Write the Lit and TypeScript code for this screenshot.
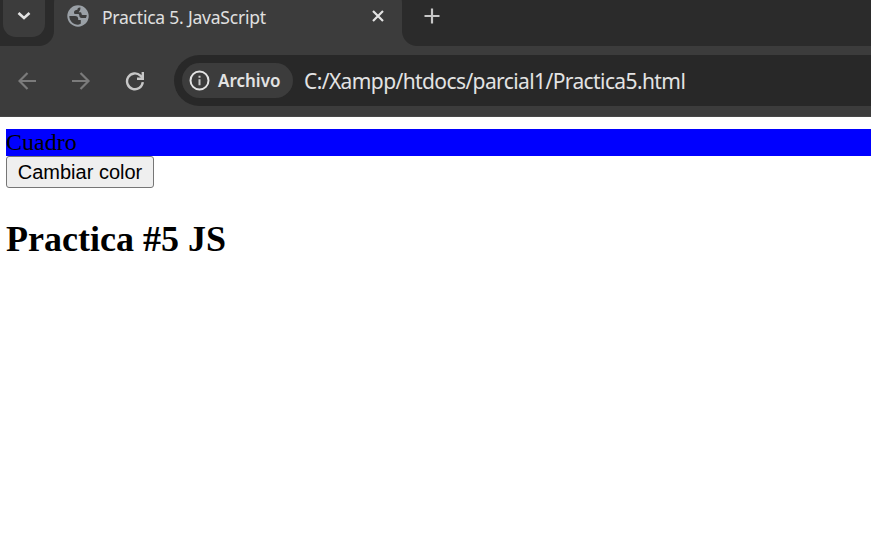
import { LitElement, html, css } from "lit";
import { customElement, state } from "lit/decorators.js";

@customElement("app-root")
export class AppRoot extends LitElement {
  @state() private active = true;

  static styles = css`
    :host { display: block; height: 553px; overflow: hidden; background: #fff; }
    svg { display: block; flex: none; }
    .strip { display: flex; height: 46px; background: #2b2b2b; }
    .search { box-sizing: border-box; width: 42px; height: 37px; margin-left: 3px; padding: 11px 0 0 14px; background: #3c3c3c; border-radius: 0 0 13px 13px; flex: none; }
    .foot { align-self: flex-end; width: 15px; height: 15px; flex: none; }
    .left { margin-left: -6px; background: radial-gradient(circle at 0 0, transparent 14.5px, #3c3c3c 15.5px); }
    .right { background: radial-gradient(circle at 100% 0, #2b2b2b 14.5px, #3c3c3c 15.5px); }
    .tab { box-sizing: border-box; display: flex; width: 348px; height: 58px; margin-top: -12px; padding: 17px 18px 0 13px; background: #3c3c3c; border-radius: 15px 15px 0 0; flex: none; }
    .title { flex: 1; margin: 0 0 0 13px; font: 17.5px/25px "Noto Sans", sans-serif; letter-spacing: -0.22px; color: #e0e0e0; white-space: nowrap; }
    .close { margin-top: 5px; }
    .plus { margin: 8px 0 0 7px; }
    .toolbar { box-sizing: border-box; display: flex; align-items: center; height: 71px; padding: 1px 0 2px 18px; background: #3c3c3c; border-bottom: 1px solid #474747; }
    .fwd { margin-left: 35px; }
    .reload { margin-left: 34px; }
    .omni { box-sizing: border-box; display: flex; align-items: center; flex: 1; height: 51px; margin-left: 29px; padding-left: 8px; background: #282828; border-radius: 26px 0 0 26px; }
    .chip { box-sizing: border-box; display: flex; align-items: center; width: 111px; height: 35px; padding-left: 7px; background: #3c3c3c; border-radius: 18px; flex: none; }
    .label { margin: 1px 0 0 8px; font: 600 17px/24px "Noto Sans", sans-serif; color: #e3e3e3; white-space: nowrap; }
    .url { margin: 0 0 0 11px; font: 21px/28px "Noto Sans", sans-serif; letter-spacing: -0.6px; color: #e3e3e3; white-space: nowrap; }
    .page { padding: 12px 0 0 6px; color: #000; font-family: "Liberation Serif", serif; }
    .box { height: 27px; font-size: 24px; line-height: 27px; }
    .blue { background: #00f; }
    button { display: block; box-sizing: border-box; width: 148px; height: 32px; padding: 0; border: 1px solid #767676; border-radius: 3px; background: #efefef; color: #000; font: 20px/28px "Liberation Sans", sans-serif; white-space: nowrap; }
    h1 { margin: 31px 0 0; font-size: 36px; line-height: 41px; }
  `;

  render() {
    return html`
      <div class="strip">
        <div class="search">
          <svg width="14" height="10" viewBox="0 0 14 10"><path d="M1.5 2L7 7l5.5-5" fill="none" stroke="#e3e3e3" stroke-width="2.6"/></svg>
        </div>
        <div class="foot left"></div>
        <div class="tab">
          <svg width="22" height="22" viewBox="0 0 22 22"><circle cx="11" cy="11" r="10.7" fill="#9aa0a6"/><path fill="#3c3c3c" d="M2.3 11h5.7c2.2 0 3.2 1.2 3.2 2.8v1.2h2.6v3.6c-.6.7-1.6 1.1-2.8 1.1-4.8 0-8.7-3.9-8.7-8.7zM13.4 2.6c-1.6-.3-3 .5-3 2.2-1.9 0-3.4 1-3.4 2.7 0 1 .5 1.5 1.6 1.5h2.3c1.1 0 1.4.6 1.4 1.6 0 1.5.9 2.4 2.3 2.4h4.3c.6-1.2.8-2 .8-3h-3.4c-1.2 0-1.8-.6-1.8-1.6 0-.8-.6-1.2-1.4-1.2h-1.5c1.5-1.3 2-2.7 1.8-4.6z"/></svg>
          <span class="title">Practica 5. JavaScript</span>
          <svg class="close" width="12" height="12" viewBox="0 0 12 12"><path d="M1 1l10 10M11 1L1 11" stroke="#e3e3e3" stroke-width="2.2"/></svg>
        </div>
        <div class="foot right"></div>
        <svg class="plus" width="16" height="16" viewBox="0 0 16 16"><path d="M8 .5v15M.5 8h15" stroke="#c7c7c7" stroke-width="2.2"/></svg>
      </div>
      <div class="toolbar">
        <svg width="18" height="18" viewBox="0 0 18 18"><path d="M18 9H1.5M9.5 1L1.5 9l8 8" fill="none" stroke="#7b7b7b" stroke-width="2.2"/></svg>
        <svg class="fwd" width="20" height="18" viewBox="0 0 20 18"><path d="M1 9h16.5M9.5 1l8 8-8 8" fill="none" stroke="#7b7b7b" stroke-width="2.2"/></svg>
        <svg class="reload" width="20" height="20" viewBox="0 0 20 20"><path d="M17.8 11.2A7.9 7.9 0 1 1 15.4 4.6L17.4 6.6" fill="none" stroke="#c7c7c7" stroke-width="2.4"/><path d="M17.8 1v6.7h-5.8" fill="none" stroke="#c7c7c7" stroke-width="2.4"/></svg>
        <div class="omni">
          <div class="chip">
            <svg width="21" height="21" viewBox="0 0 21 21"><circle cx="10.5" cy="10.5" r="9" fill="none" stroke="#e3e3e3" stroke-width="2"/><path d="M9.5 9.2h2v6h-2zM9.5 5.7h2v2h-2z" fill="#c7c7c7"/></svg>
            <span class="label">Archivo</span>
          </div>
          <span class="url">C:/Xampp/htdocs/parcial1/Practica5.html</span>
        </div>
      </div>
      <div class="page">
        <div class="box ${this.active ? "blue" : ""}">Cuadro</div>
        <button @click=${() => (this.active = !this.active)}>Cambiar color</button>
        <h1>Practica #5 JS</h1>
      </div>
    `;
  }
}
